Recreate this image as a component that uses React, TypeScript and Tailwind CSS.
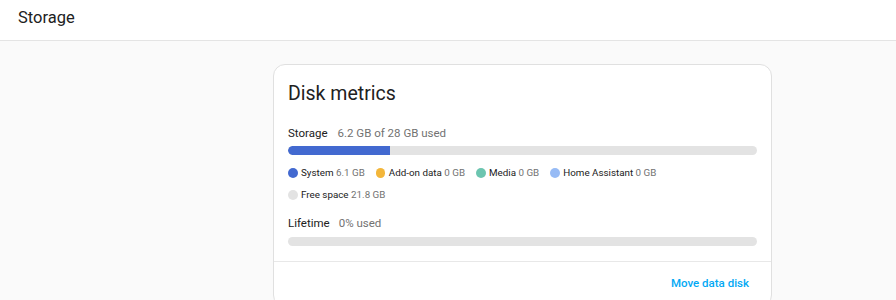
import React from "react";

const legend = [
  { label: "System", value: "6.1 GB", color: "bg-[#4269d0]" },
  { label: "Add-on data", value: "0 GB", color: "bg-[#f3b63a]" },
  { label: "Media", value: "0 GB", color: "bg-[#6cc5b0]" },
  { label: "Home Assistant", value: "0 GB", color: "bg-[#97bbf5]" },
];

function LegendItem({ label, value, color }: { label: string; value: string; color: string }) {
  return (
    <div className="flex items-center h-[16px]">
      <span className={`w-[9.5px] h-[9.5px] rounded-full ${color} mr-[3.5px]`} />
      <span className="text-[9.8px] text-[#212121]">{label}</span>
      <span className="text-[9.8px] text-[#727272] ml-[2.5px]">{value}</span>
    </div>
  );
}

export default function App() {
  return (
    <div className="w-[896px] h-[300px] overflow-hidden bg-[#fafafa]" style={{ fontFamily: "Roboto, 'Noto Sans', sans-serif" }}>
      <div className="h-[41px] bg-white border-b border-[#e4e4e4] flex items-center pl-[18px]">
        <span className="text-[16.5px] text-[#212121] leading-[20px] -mt-[5px]">Storage</span>
      </div>
      <div className="pl-[273px] pt-[23px]">
        <div className="w-[499px] bg-white border border-[#e0e0e0] rounded-[12px]">
          <div className="px-[14px] pt-[16px] pb-[15px]">
            <div className="text-[19.5px] leading-[26px] text-[#212121]">Disk metrics</div>
            <div className="mt-[19px] flex items-center h-[16px] text-[11.5px]">
              <span className="text-[#212121]">Storage</span>
              <span className="text-[#727272] ml-[10px]">6.2 GB of 28 GB used</span>
            </div>
            <div className="mt-[4px] h-[9px] rounded-full bg-[#e3e3e3] overflow-hidden flex">
              <div className="h-full bg-[#4269d0] rounded-l-full" style={{ width: `${(6.1 / 28) * 100}%` }} />
            </div>
            <div className="mt-[10px] flex flex-wrap gap-x-[11px] gap-y-[6px] w-[400px]">
              {legend.map((l) => (
                <LegendItem key={l.label} {...l} />
              ))}
              <div className="w-full flex">
                <LegendItem label="Free space" value="21.8 GB" color="bg-[#e3e3e3]" />
              </div>
            </div>
            <div className="mt-[13px] flex items-center h-[16px] text-[11.5px]">
              <span className="text-[#212121]">Lifetime</span>
              <span className="text-[#727272] ml-[9px]">0% used</span>
            </div>
            <div className="mt-[5px] h-[9px] rounded-full bg-[#e3e3e3]" />
          </div>
          <div className="border-t border-[#e8e8e8] flex justify-end px-[14px] pt-[8px] pb-[8px]">
            <button className="h-[28px] px-[8px] text-[11.5px] font-medium text-[#03a9f4]">Move data disk</button>
          </div>
        </div>
      </div>
    </div>
  );
}
